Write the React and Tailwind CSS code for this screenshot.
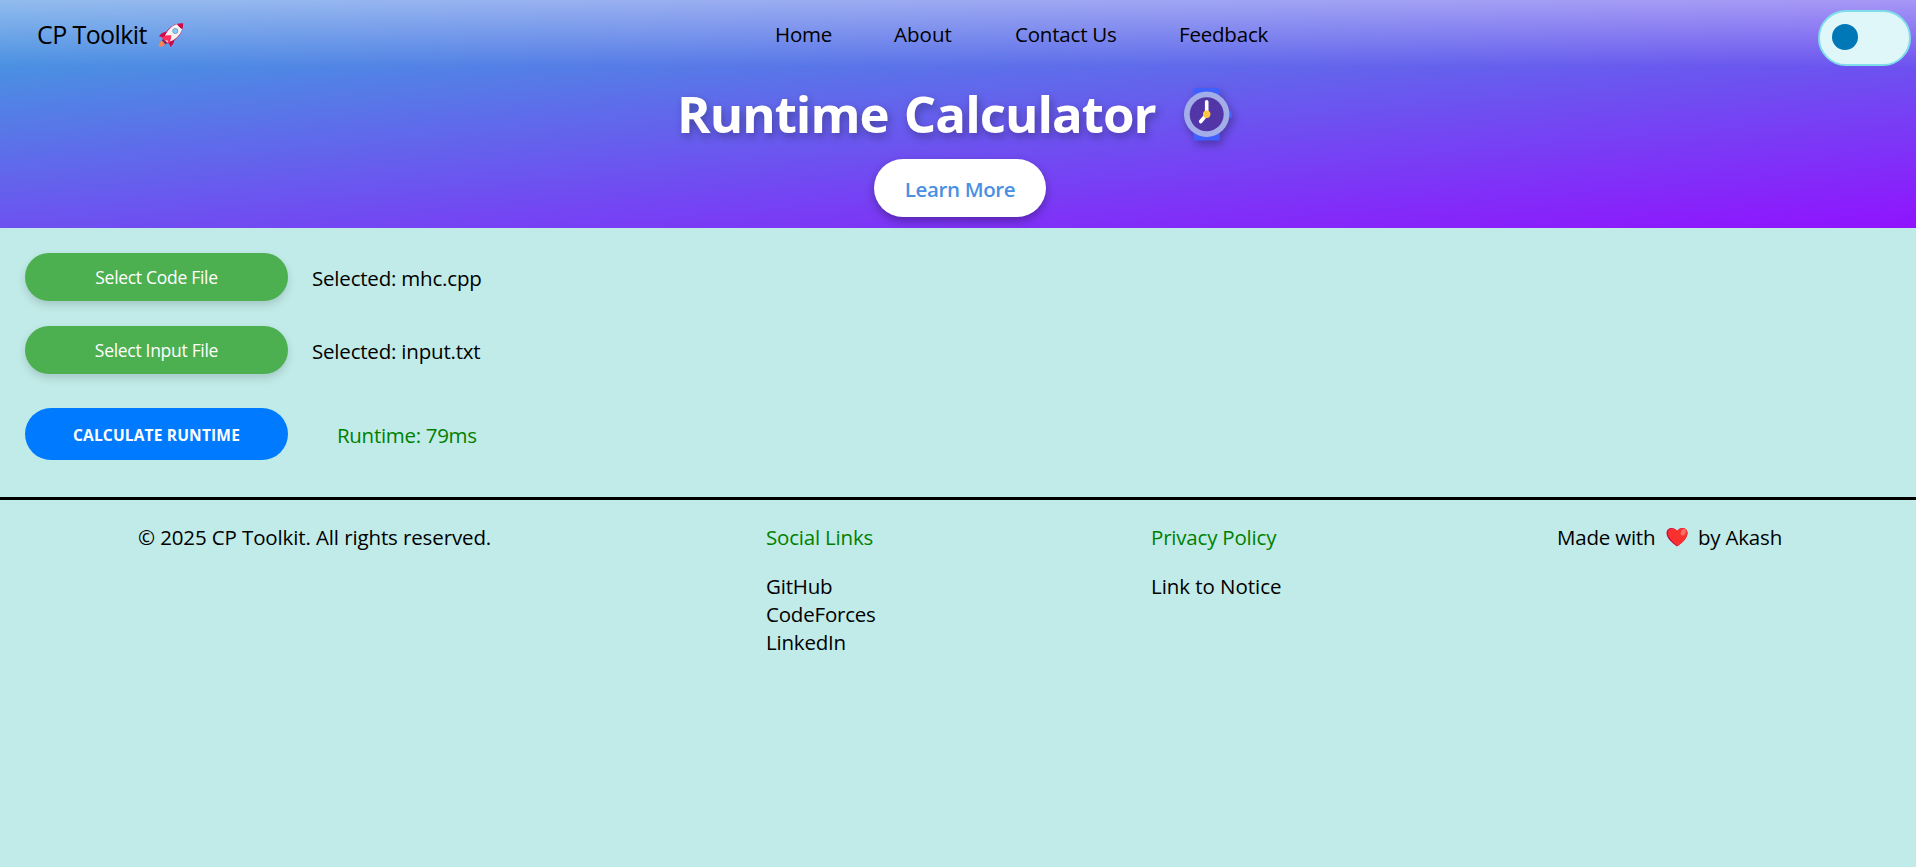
import React from "react";

function Rocket() {
  return (
    <svg viewBox="0 0 26 26" className="h-[26px] w-[26px]">
      <path d="M3.500 19 C6 18.500 8 20.500 6.500 22.800 C5 25 2.500 24.500 0.800 25 C1 23 1 20 3.500 19 Z" fill="#ff8257" />
      <path d="M5 17 L9 21 L7.500 22.500 L4 18.500 Z" fill="#533566" />
      <path d="M9 9.500 C5 10 2.500 12 1 14.200 L5 15.500 L11 21.500 L12.500 25 C15 23 16.500 20 16.500 16.500 Z" fill="#ca0b4a" />
      <path d="M5 17.500 C6.500 9 14 1 25.200 1.200 C25.500 11.500 17.500 19.500 9 21.500 Z" fill="#ca0b4a" />
      <path d="M6 17.200 C8 9.500 13 4 19 2.300 C20.500 4.500 22 6 24.200 7.300 C22 13.500 17 18.500 9.200 20.400 Z" fill="#f4f4f4" />
      <path d="M3.500 15.500 C7 13.200 9.500 13 13.300 13.300 C13.300 16 12.500 19.500 10.500 22 L9.500 18.500 L6.500 18.500 Z" fill="#ff2f5d" />
      <circle cx="17.300" cy="9" r="2.600" fill="#83cbff" stroke="#7a90a8" strokeWidth="0.800" />
    </svg>
  );
}

function Watch() {
  return (
    <svg viewBox="0 0 50 55" className="h-[55px] w-[50px] overflow-visible drop-shadow-[2px_4px_4px_rgba(0,0,0,0.3)]">
      <rect x="10.700" y="1" width="26" height="52.500" rx="1.500" fill="#3f5fff" />
      <rect x="43" y="23.700" width="6" height="7.300" rx="2" fill="#3f5fff" />
      <circle cx="23.700" cy="27.300" r="22.700" fill="#a3ade8" />
      <circle cx="23.700" cy="27.300" r="17" fill="#5235a6" />
      <path d="M23.700 14.800 V27.300 L17.700 34.500" fill="none" stroke="#fff" strokeWidth="3.600" strokeLinecap="round" />
      <circle cx="23.700" cy="27.300" r="3.700" fill="#ffc83d" />
    </svg>
  );
}

function Heart() {
  return (
    <svg viewBox="0 0 22 20" className="h-5 w-[22px]">
      <path d="M11 19.500 C5 15 0.500 11 0.500 6 C0.500 0.500 8 -1 11 4 C14 -1 21.500 0.500 21.500 6 C21.500 11 17 15 11 19.500 Z" fill="#ca0b4a" />
      <path d="M12 19 C6 14 2 10.500 2 6 C2 1.500 8.500 -0.500 11.500 4.500 C14 -1 21.500 0.500 21.500 6 C21.500 11 17 15 12 19 Z" fill="#f8312f" />
      <ellipse cx="17.300" cy="5.200" rx="2.300" ry="3.400" fill="#f37366" transform="rotate(25 17.3 5.2)" />
    </svg>
  );
}

export default function App() {
  return (
    <div className="min-h-[867px] w-full bg-[#c1ebe8] font-['Open_Sans','Noto_Sans',sans-serif] text-[20.5px] leading-7 tracking-[-0.2px] text-black">
      <header className="h-[228px]">
        <nav className="flex h-[67px] items-start bg-[linear-gradient(to_bottom,rgba(255,255,255,0.4),rgba(255,255,255,0)),linear-gradient(to_right,#4a90e2,#6d52f0)]">
          <div className="flex w-[775px] items-start pt-[17px] pl-[37px] text-[25px] leading-[34px] tracking-[-0.6px]">
            <span className="w-[121px]">CP Toolkit</span>
            <span className="pt-[5px]">
              <Rocket />
            </span>
          </div>
          <div className="flex pt-5">
            <a className="w-[119px]">Home</a>
            <a className="w-[121px] tracking-[0.05px]">About</a>
            <a className="w-[164px]">Contact Us</a>
            <a>Feedback</a>
          </div>
          <div className="mt-[10px] mr-[5px] ml-auto flex h-[56px] w-[93px] items-center rounded-full border-2 border-[#80deea] bg-[#e0f7fa] pl-3">
            <div className="mb-[2px] h-[26px] w-[26px] rounded-full bg-[#0077b6]" />
          </div>
        </nav>
        <div className="h-[161px] bg-[linear-gradient(to_bottom_right,#4a90e2,#9013fe)]">
          <div className="flex h-[92px] items-start pt-5 pl-[677px] text-white">
            <h1 className="-mt-0.5 w-[506px] text-[51px] leading-[56px] font-bold tracking-[-1px] [word-spacing:3px] whitespace-nowrap [text-shadow:2px_4px_8px_rgba(0,0,0,0.3)]">
              Runtime Calculator
            </h1>
            <Watch />
          </div>
          <div className="ml-[874px] flex h-[58px] w-[172px] items-center justify-center rounded-full bg-white pt-px font-semibold tracking-[-0.35px] text-[#4a90e2] shadow-[0_4px_10px_rgba(0,0,0,0.3)]">
            Learn More
          </div>
        </div>
      </header>
      <main className="h-[269px] pt-[25px] pl-[25px]">
        <div className="flex h-[73px] items-start">
          <button className="h-12 w-[263px] rounded-3xl bg-[#4caf50] pb-px text-[17.5px] tracking-[-0.3px] text-white shadow-[0_4px_8px_rgba(0,0,0,0.15)]">
            Select Code File
          </button>
          <span className="mt-[11px] ml-6">Selected: mhc.cpp</span>
        </div>
        <div className="flex h-[82px] items-start">
          <button className="h-12 w-[263px] rounded-3xl bg-[#4caf50] pb-px text-[17.5px] tracking-[-0.3px] text-white shadow-[0_4px_8px_rgba(0,0,0,0.15)]">
            Select Input File
          </button>
          <span className="mt-[11px] ml-6">Selected: input.txt</span>
        </div>
        <div className="flex items-start">
          <button className="h-[52px] w-[263px] rounded-full bg-[#007bff] pt-0.5 text-[15.5px] font-bold tracking-[0.18px] text-white">
            CALCULATE RUNTIME
          </button>
          <span className="mt-[13px] ml-[49px] tracking-[-0.3px] text-[#008000]">Runtime: 79ms</span>
        </div>
      </main>
      <footer className="flex items-start border-t-[3px] border-black pt-[23px] pl-[138px]">
        <p className="w-[628px] tracking-[-0.12px]">© 2025 CP Toolkit. All rights reserved.</p>
        <div className="w-[385px]">
          <h2 className="mb-[21px] text-[#008000]">Social Links</h2>
          <p>GitHub</p>
          <p>CodeForces</p>
          <p>LinkedIn</p>
        </div>
        <div className="w-[406px]">
          <h2 className="mb-[21px] text-[#008000]">Privacy Policy</h2>
          <p className="tracking-[-0.05px]">Link to Notice</p>
        </div>
        <div className="flex items-center">
          <span className="w-[109px]">Made with</span>
          <Heart />
          <span className="ml-[10px]">by Akash</span>
        </div>
      </footer>
    </div>
  );
}
